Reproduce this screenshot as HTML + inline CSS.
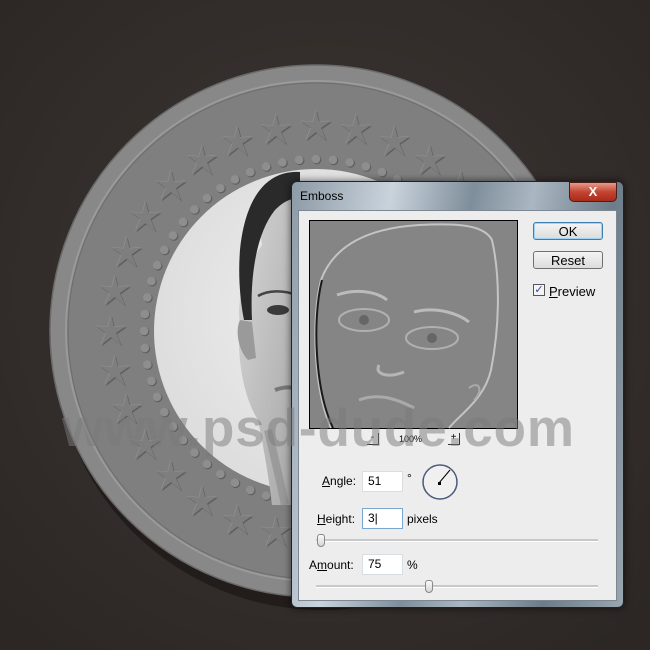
<!DOCTYPE html>
<html><head><meta charset="utf-8">
<style>
html,body{margin:0;padding:0;}
body{width:650px;height:650px;overflow:hidden;position:relative;background:#35302d;font-family:"Liberation Sans",sans-serif;}
.abs{position:absolute;}
.dlg{left:291px;top:181px;width:333px;height:427px;border:1px solid #1c232b;border-radius:6px;box-sizing:border-box;
background:linear-gradient(100deg,#8c9aa6 0%,#c9d3dc 25%,#7f8e9b 45%,#aab7c2 60%,#6d7c89 80%,#9aa6b0 100%);box-shadow:0 0 8px rgba(0,0,0,.6);}
.panel{left:298px;top:210px;width:319px;height:391px;background:#ededed;border:1px solid #7d8792;box-sizing:border-box;}
.title{left:300px;top:189px;font-size:12px;color:#000;}
.close{left:569px;top:182px;width:48px;height:20px;border-radius:0 0 5px 5px;background:linear-gradient(#e59a88,#c44432 50%,#a82b1a);border:1px solid #4a1e18;box-sizing:border-box;color:#fff;font-weight:bold;font-size:13px;text-align:center;line-height:18px;}
.btn{width:70px;height:18px;border:1px solid #707070;border-radius:3px;background:linear-gradient(#f4f4f4,#dcdcdc);font-size:13px;text-align:center;line-height:17px;box-sizing:border-box;color:#000;}
.lbl{font-size:12px;color:#000;}
.inp{width:41px;height:21px;background:#fff;border:1px solid #d8dde2;box-sizing:border-box;font-size:12px;line-height:19px;padding-left:5px;}
.track{height:2px;background:#c8c8c8;border-bottom:1px solid #fff;}
.thumb{width:8px;height:13px;border:1px solid #888;border-radius:3px 3px 4px 4px;background:linear-gradient(#fafafa,#d5d5d5);box-sizing:border-box;}
u{text-decoration:underline;}
.sm{width:11px;height:11px;border-right:1px solid #333;border-bottom:1px solid #333;background:#eee;font-size:10px;line-height:9px;text-align:center;}
</style></head><body>
<svg class="abs" style="left:0;top:0" width="650" height="650">
<defs>
<radialGradient id="bg" cx="50%" cy="45%" r="70%"><stop offset="0" stop-color="#3d3633"/><stop offset="1" stop-color="#2c2725"/></radialGradient>
<radialGradient id="wh" cx="55%" cy="45%" r="60%"><stop offset="0" stop-color="#f0f0f0"/><stop offset="1" stop-color="#dcdcdc"/></radialGradient>
<linearGradient id="skin" x1="0" y1="0" x2="1" y2="1"><stop offset="0" stop-color="#d8d8d8"/><stop offset="1" stop-color="#a5a5a5"/></linearGradient>
<g id="st"><polygon points="0,-16 3,-4 15,-5 5,2 10,14 0,6 -10,14 -5,2 -15,-5 -3,-4" fill="#5f5f5f" transform="translate(1,1.2)"/><polygon points="0,-16 3,-4 15,-5 5,2 10,14 0,6 -10,14 -5,2 -15,-5 -3,-4" fill="#939393" transform="translate(-0.5,-0.5)"/><polygon points="0,-16 3,-4 15,-5 5,2 10,14 0,6 -10,14 -5,2 -15,-5 -3,-4" fill="#7e7e7e"/></g>
</defs>
<rect width="650" height="650" fill="url(#bg)"/>
<circle cx="322" cy="342" r="268" fill="#15110f" opacity=".55"/>
<circle cx="316" cy="331" r="266" fill="#888" stroke="#6a6a6a" stroke-width="1.5"/>
<circle cx="316" cy="331" r="250" fill="#7f7f7f" stroke="#9a9a9a" stroke-width="2"/>
<circle cx="316" cy="331" r="248" fill="none" stroke="#6e6e6e" stroke-width="1"/>
<g id="stars"></g>
<g id="dots"></g>
<circle cx="316" cy="331" r="162" fill="url(#wh)"/>
<path d="M262 245 C255 200 270 175 300 172 L300 505 L272 505 C268 470 262 440 258 420 C245 400 236 360 240 325 C236 300 245 270 262 245 Z" fill="url(#skin)"/>
<path d="M300 172 C265 170 245 200 240 250 C238 275 240 300 244 320 L252 320 C250 280 255 235 275 210 C285 200 293 198 300 198 Z" fill="#2a2a2a"/>
<path d="M240 320 C235 330 238 350 248 360 L256 358 L252 322 Z" fill="#9a9a9a"/>
<path d="M258 296 C268 290 284 290 296 295" stroke="#444" stroke-width="2.5" fill="none"/>
<ellipse cx="278" cy="310" rx="11" ry="5" fill="#3a3a3a"/>
<path d="M275 390 C285 386 295 387 300 390" stroke="#777" stroke-width="4" fill="none"/>
<path d="M268 430 C275 460 280 480 285 505" stroke="#8a8a8a" stroke-width="8" fill="none" opacity=".6"/>
</svg>
<script>
var s='',d='';
for(var i=0;i<32;i++){var a=i/32*Math.PI*2;var x=316+205*Math.cos(a),y=331+205*Math.sin(a);s+='<use href="#st" transform="translate('+x.toFixed(1)+','+y.toFixed(1)+')"/>';}
for(var j=0;j<64;j++){var b=j/64*Math.PI*2;var x2=316+172*Math.cos(b),y2=331+172*Math.sin(b);d+='<circle cx="'+(x2+0.8).toFixed(1)+'" cy="'+(y2+0.8).toFixed(1)+'" r="4.6" fill="#5e5e5e"/><circle cx="'+x2.toFixed(1)+'" cy="'+y2.toFixed(1)+'" r="4.3" fill="#8e8e8e"/>';}
document.getElementById('stars').innerHTML=s;document.getElementById('dots').innerHTML=d;
</script>
<div class="abs dlg"></div>
<div class="abs title">Emboss</div>
<div class="abs close">X</div>
<div class="abs panel"></div>
<svg class="abs" style="left:309px;top:220px" width="209" height="209">
<rect x="0.5" y="0.5" width="208" height="208" fill="#858585" stroke="#000"/>
<path d="M22 208 C5 170 2 100 12 60 C25 25 60 8 110 5 C150 3 175 5 183 20 C192 60 190 110 182 150 C175 180 150 195 140 208" fill="none" stroke="#c4c4c4" stroke-width="2"/>
<path d="M24 208 C6 170 3 100 13 60" fill="none" stroke="#1a1a1a" stroke-width="2"/>
<ellipse cx="55" cy="100" rx="25" ry="11" fill="none" stroke="#b0b0b0" stroke-width="2"/>
<ellipse cx="123" cy="118" rx="26" ry="11" fill="none" stroke="#b0b0b0" stroke-width="2"/>
<circle cx="55" cy="100" r="5" fill="#666"/><circle cx="123" cy="118" r="5" fill="#666"/>
<path d="M28 75 C48 68 68 72 78 80 M105 92 C128 86 150 94 160 102" stroke="#bbb" stroke-width="3" fill="none"/>
<path d="M70 145 C65 155 80 158 95 152" stroke="#b5b5b5" stroke-width="3" fill="none"/>
<path d="M50 180 C70 172 90 180 105 188" stroke="#aaa" stroke-width="3" fill="none"/>
<path d="M160 168 C170 160 175 170 165 180" stroke="#aaa" stroke-width="2" fill="none"/>
</svg>
<div class="abs sm" style="left:367px;top:433px">-</div>
<div class="abs lbl" style="left:399px;top:434px;font-size:9px">100%</div>
<div class="abs sm" style="left:448px;top:433px">+</div>
<div class="abs btn" style="left:533px;top:222px;border-color:#3c7fb1;box-shadow:inset 0 0 0 1px #9ed4f5">OK</div>
<div class="abs btn" style="left:533px;top:251px">Reset</div>
<div class="abs" style="left:533px;top:284px;width:12px;height:12px;border:1px solid #555;background:#f4f4f4;box-sizing:border-box;font-size:11px;line-height:10px;color:#2a4a9a;text-align:center">✓</div>
<div class="abs lbl" style="left:549px;top:284px;font-size:13px"><u>P</u>review</div>
<div class="abs lbl" style="left:322px;top:474px"><u>A</u>ngle:</div>
<div class="abs inp" style="left:362px;top:471px">51</div>
<div class="abs lbl" style="left:407px;top:471px">°</div>
<svg class="abs" style="left:421px;top:463px" width="38" height="38"><circle cx="19" cy="19" r="17" fill="#f0f0f0" stroke="#4a5a7a" stroke-width="1.5"/><line x1="18" y1="20" x2="29" y2="7" stroke="#000"/><rect x="17" y="19" width="3" height="3"/></svg>
<div class="abs lbl" style="left:317px;top:512px"><u>H</u>eight:</div>
<div class="abs inp" style="left:362px;top:508px;border-color:#7aa7d0">3|</div>
<div class="abs lbl" style="left:407px;top:512px">pixels</div>
<div class="abs track" style="left:316px;top:539px;width:282px"></div>
<div class="abs thumb" style="left:317px;top:534px"></div>
<div class="abs lbl" style="left:309px;top:558px">A<u>m</u>ount:</div>
<div class="abs inp" style="left:362px;top:554px">75</div>
<div class="abs lbl" style="left:407px;top:558px">%</div>
<div class="abs track" style="left:316px;top:585px;width:282px"></div>
<div class="abs thumb" style="left:425px;top:580px"></div>
<svg class="abs" style="left:0;top:0" width="650" height="650"><text x="318" y="446" font-family="Liberation Sans" font-weight="bold" font-size="53" fill="#7a7a7a" fill-opacity=".5" text-anchor="middle" textLength="512">www.psd-dude.com</text></svg>
</body></html>
